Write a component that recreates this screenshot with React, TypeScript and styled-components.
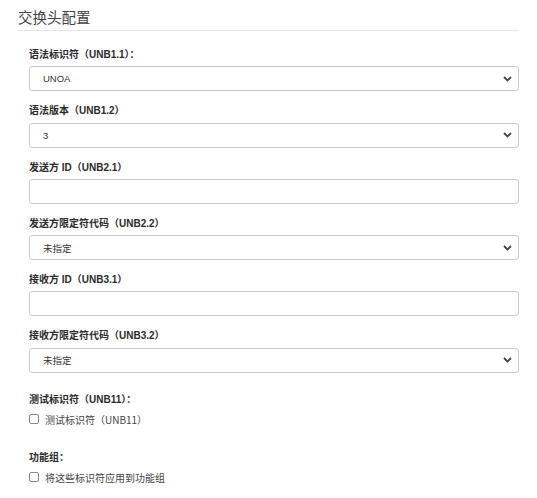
import React from "react";
import styled, { createGlobalStyle } from "styled-components";

const GlobalStyle = createGlobalStyle`
  html, body {
    margin: 0;
    padding: 0;
    background: #ffffff;
  }
  body {
    font-family: "Liberation Sans", "Noto Sans CJK SC", sans-serif;
    color: #333333;
  }
`;

type Field = {
	label: string;
	kind: "select" | "input";
	value?: string;
};

const fields: Field[] = [
	{ label: "语法标识符（UNB1.1）：", kind: "select", value: "UNOA" },
	{ label: "语法版本（UNB1.2）", kind: "select", value: "3" },
	{ label: "发送方 ID（UNB2.1）", kind: "input" },
	{ label: "发送方限定符代码（UNB2.2）", kind: "select", value: "未指定" },
	{ label: "接收方 ID（UNB3.1）", kind: "input" },
	{ label: "接收方限定符代码（UNB3.2）", kind: "select", value: "未指定" },
];

const Chevron = () => (
	<svg width="9" height="6" viewBox="0 0 9 6">
		<path d="M1 1 L4.5 4.5 L8 1" fill="none" stroke="#444" strokeWidth="1.8" />
	</svg>
);

export default function App() {
	return (
		<>
			<GlobalStyle />
			<Panel>
				<Title>交换头配置</Title>
				<Body>
					{fields.map((f) => (
						<FormGroup key={f.label}>
							<Label>{f.label}</Label>
							{f.kind === "select" ? (
								<SelectBox>
									<SelectValue>{f.value}</SelectValue>
									<Chevron />
								</SelectBox>
							) : (
								<TextBox type="text" />
							)}
						</FormGroup>
					))}
					<CheckGroup>
						<Label>测试标识符（UNB11）：</Label>
						<CheckRow>
							<Box type="checkbox" />
							<CheckText>测试标识符（UNB11）</CheckText>
						</CheckRow>
					</CheckGroup>
					<CheckGroup $spaced>
						<Label>功能组：</Label>
						<CheckRow>
							<Box type="checkbox" />
							<CheckText>将这些标识符应用到功能组</CheckText>
						</CheckRow>
					</CheckGroup>
				</Body>
			</Panel>
		</>
	);
}

const Panel = styled.div`
  width: 502px;
  padding: 5px 0 0 17px;
`;

const Title = styled.h3`
  margin: 0;
  padding: 1px 0 2px 1px;
  font-family: "Noto Sans CJK SC", sans-serif;
  font-weight: 400;
  font-size: 14.5px;
  line-height: 22px;
  color: #444;
  border-bottom: 1px solid #e5e5e5;
`;

const Body = styled.div`
  display: flex;
  flex-direction: column;
  padding: 16px 0 0 12px;
`;

const FormGroup = styled.div`
  display: flex;
  flex-direction: column;
  margin-bottom: 12px;
`;

const Label = styled.label`
  display: block;
  font-family: "Liberation Sans", "Noto Sans CJK SC", sans-serif;
  font-weight: 700;
  font-size: 10px;
  line-height: 15.3px;
  margin-bottom: 4px;
  color: #2b2b2b;
`;

const fieldBase = `
  box-sizing: border-box;
  height: 25px;
  width: 100%;
  border: 1px solid #cccccc;
  border-radius: 3px;
  background: #fff;
`;

const SelectBox = styled.div`
  ${fieldBase}
  display: flex;
  align-items: center;
  justify-content: space-between;
  padding: 0 6px 0 13px;
`;

const SelectValue = styled.span`
  font-family: "Liberation Sans", "Noto Sans CJK SC", sans-serif;
  font-size: 9.5px;
  color: #333;
`;

const TextBox = styled.input`
  ${fieldBase}
  display: block;
  padding: 0 13px;
  outline: none;
`;

const CheckGroup = styled.div<{ $spaced?: boolean }>`
  display: flex;
  flex-direction: column;
  margin-top: ${(p) => (p.$spaced ? "23px" : "7px")};
`;

const CheckRow = styled.div`
  display: flex;
  align-items: center;
  gap: 6px;
  height: 16px;
`;

const Box = styled.input`
  appearance: none;
  margin: 0;
  width: 10px;
  height: 10px;
  border: 1px solid #8a8a8a;
  border-radius: 2px;
  background: #fff;
`;

const CheckText = styled.span`
  font-family: "Noto Sans CJK SC", sans-serif;
  font-size: 10px;
  color: #444;
`;
